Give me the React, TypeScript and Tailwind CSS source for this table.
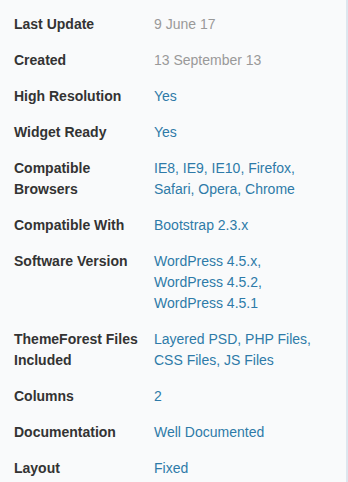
import React from "react";

type Row = { label: string; value: string; muted?: boolean };

const rows: Row[] = [
  { label: "Last Update", value: "9 June 17", muted: true },
  { label: "Created", value: "13 September 13", muted: true },
  { label: "High Resolution", value: "Yes" },
  { label: "Widget Ready", value: "Yes" },
  { label: "Compatible Browsers", value: "IE8, IE9, IE10, Firefox, Safari, Opera, Chrome" },
  { label: "Compatible With", value: "Bootstrap 2.3.x" },
  { label: "Software Version", value: "WordPress 4.5.x, WordPress 4.5.2, WordPress 4.5.1" },
  { label: "ThemeForest Files Included", value: "Layered PSD, PHP Files, CSS Files, JS Files" },
  { label: "Columns", value: "2" },
  { label: "Documentation", value: "Well Documented" },
  { label: "Layout", value: "Fixed" },
];

export default function App() {
  return (
    <div className="w-[348px] h-[482px] bg-[#f9fafb] border-r-2 border-[#dde6ee] overflow-hidden font-['Liberation_Sans',Arial,sans-serif]">
      <div className="flex flex-col gap-[15px] pt-[14px] pl-[14px] text-[14px] leading-[21px]">
        {rows.map((r) => (
          <div key={r.label} className="flex">
            <div className="w-[140px] shrink-0 pr-2 font-bold text-[#333333]">{r.label}</div>
            <div className={r.muted ? "w-[175px] text-[#999999]" : "w-[175px] text-[#2e7aa8]"}>
              {r.value}
            </div>
          </div>
        ))}
      </div>
    </div>
  );
}
